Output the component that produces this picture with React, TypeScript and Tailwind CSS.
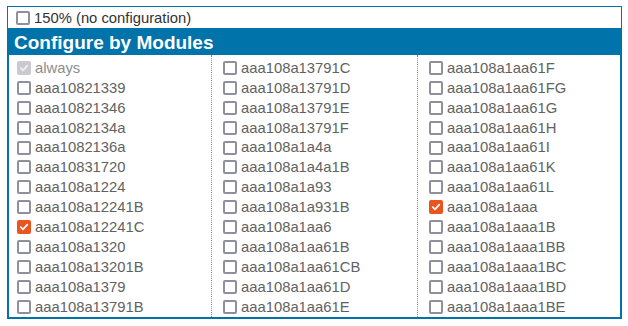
const columns: string[][] = [
  [
    "always",
    "aaa10821339",
    "aaa10821346",
    "aaa1082134a",
    "aaa1082136a",
    "aaa10831720",
    "aaa108a1224",
    "aaa108a12241B",
    "aaa108a12241C",
    "aaa108a1320",
    "aaa108a13201B",
    "aaa108a1379",
    "aaa108a13791B",
  ],
  [
    "aaa108a13791C",
    "aaa108a13791D",
    "aaa108a13791E",
    "aaa108a13791F",
    "aaa108a1a4a",
    "aaa108a1a4a1B",
    "aaa108a1a93",
    "aaa108a1a931B",
    "aaa108a1aa6",
    "aaa108a1aa61B",
    "aaa108a1aa61CB",
    "aaa108a1aa61D",
    "aaa108a1aa61E",
  ],
  [
    "aaa108a1aa61F",
    "aaa108a1aa61FG",
    "aaa108a1aa61G",
    "aaa108a1aa61H",
    "aaa108a1aa61I",
    "aaa108a1aa61K",
    "aaa108a1aa61L",
    "aaa108a1aaa",
    "aaa108a1aaa1B",
    "aaa108a1aaa1BB",
    "aaa108a1aaa1BC",
    "aaa108a1aaa1BD",
    "aaa108a1aaa1BE",
  ],
];

const checked = new Set(["always", "aaa108a12241C", "aaa108a1aaa"]);

const Box = ({ on, disabled }: { on?: boolean; disabled?: boolean }) => {
  if (on) {
    return (
      <span
        className={
          "flex w-[14px] h-[14px] shrink-0 items-center justify-center rounded-[2px] " +
          (disabled ? "bg-[#c9c9cf]" : "bg-[#e9541f]")
        }
      >
        <svg width="10" height="10" viewBox="0 0 10 10" fill="none">
          <path
            d="M1.8 5.2 L4 7.3 L8.3 2.6"
            stroke={disabled ? "#f0f0f2" : "#ffffff"}
            strokeWidth="1.8"
            strokeLinecap="round"
            strokeLinejoin="round"
          />
        </svg>
      </span>
    );
  }
  return <span className="block w-[14px] h-[14px] shrink-0 rounded-[2px] border-2 border-[#8f8f9d] bg-white" />;
};

export default function App() {
  return (
    <div className="bg-white w-[628px] h-[326px] pt-[6px] pl-[7px] font-['Liberation_Sans',Arial,sans-serif]">
      <div className="w-[615px]">
        <label className="flex items-center h-[23px] pt-[1px] border border-[#0073aa] pl-[8px] text-[14.8px] text-[#333]">
          <Box />
          <span className="ml-[4px]">150% (no configuration)</span>
        </label>
        <div className="border-x-2 border-b-2 border-[#0073aa]">
          <div className="h-[26px] bg-[#0073aa] -mx-[2px] pl-[7px] flex items-center text-white font-bold text-[19px] leading-none">
            Configure by Modules
          </div>
          <div className="grid grid-cols-[202px_206px_1fr]">
            {columns.map((col, ci) => (
              <div
                key={ci}
                className={
                  "pt-[3px] " +
                  (ci === 0 ? "pl-[8px]" : "pl-[11px] border-l border-dotted border-[#5a9ac6]")
                }
              >
                {col.map((name) => {
                  const dis = name === "always";
                  return (
                    <label key={name} className="flex items-center h-[19.9px] text-[14.8px]">
                      <Box on={checked.has(name)} disabled={dis} />
                      <span className={"ml-[4px] " + (dis ? "text-[#8d8d8d]" : "text-[#626262]")}>{name}</span>
                    </label>
                  );
                })}
              </div>
            ))}
          </div>
        </div>
      </div>
    </div>
  );
}
